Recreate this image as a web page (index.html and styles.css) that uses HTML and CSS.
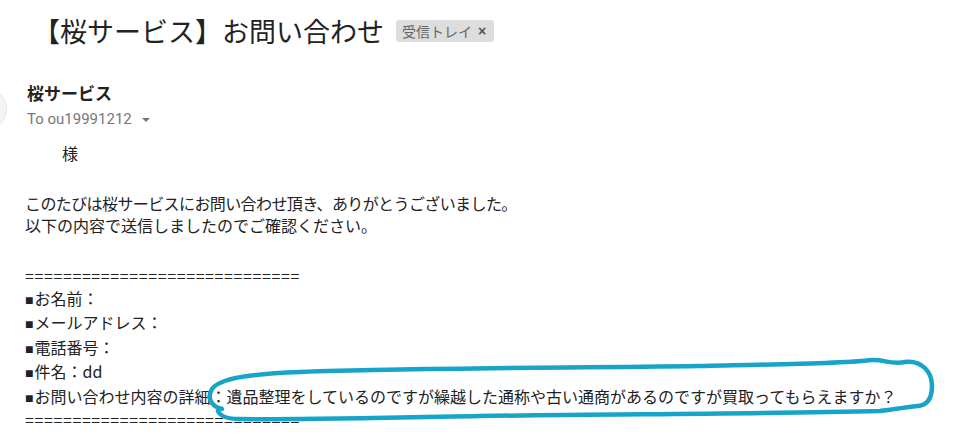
FILE: index.html
```html
<!DOCTYPE html>
<html lang="ja">
  <head>
    <meta charset="UTF-8" />
    <meta name="viewport" content="width=device-width, initial-scale=1.0" />
    <title>【桜サービス】お問い合わせ</title>
    <link rel="stylesheet" href="styles.css">
  </head>
  <body>
    <div class="mail">
      <div class="subject-row">
        <h1 class="subject">【桜サービス】お問い合わせ</h1>
        <span class="label">受信トレイ <b class="label-x">×</b></span>
      </div>

      <div class="sender-row">
        <div class="avatar"></div>
        <div class="sender">
          <div class="sender-name">桜サービス</div>
          <div class="recipient">To ou19991212 <span class="caret"></span></div>
        </div>
      </div>

      <div class="body">
        <p class="greeting">様</p>
        <p class="intro"><span class="tight">このたびは桜サービスにお問い合わせ頂き、ありがとうございました。</span><br>以下の内容で送信しましたのでご確認ください。</p>
        <div class="fields">
          <div class="rule">=============================</div>
          <div><span class="sq">■</span>お名前：</div>
          <div><span class="sq">■</span>メールアドレス：</div>
          <div><span class="sq">■</span>電話番号：</div>
          <div><span class="sq">■</span>件名：dd</div>
          <div><span class="sq">■</span>お問い合わせ内容の詳細：遺品整理をしているのですが繰越した通称や古い通商があるのですが買取ってもらえますか？</div>
          <div class="rule">=============================</div>
        </div>
      </div>
    </div>

    <!-- hand drawn marker circle over the last field -->
    <svg class="marker" width="960" height="442" viewBox="0 0 960 442">
      <path d="M222 409 C210 406 207 397 212 389 C220 378 250 374 300 372 C420 368 560 368 700 366 C780 364 840 364 872 360 C884 359 890 365 905 362 C922 360 932 372 932 386 C932 398 928 405 918 406 C900 408 890 410 880 411 C760 414 620 414 480 416 C380 418 300 420 240 419 C228 419 220 416 218 411"/>
    </svg>
  </body>
</html>
```

FILE: styles.css
```css
body {
  margin: 0;
  background: #fff;
  color: #222;
  font-family: "Noto Sans CJK JP", "Noto Sans", sans-serif;
  overflow: hidden;
}

.mail {
  padding: 0 0 0 25px;
}

.subject-row {
  display: flex;
  align-items: center;
  gap: 12px;
  padding: 8px 0 0 8px;
  height: 46px;
}

.subject {
  margin: 0;
  font-size: 27px;
  font-weight: 400;
  line-height: 38px;
  color: #222;
}

.label {
  display: inline-flex;
  align-items: center;
  gap: 6px;
  height: 22px;
  padding: 0 8px 0 6px;
  background: #ddd;
  border-radius: 3px;
  color: #666;
  font-size: 14px;
}

.label-x {
  font-family: "Liberation Sans", sans-serif;
  font-size: 14px;
  color: #555;
}

.sender-row {
  display: flex;
  align-items: flex-start;
  margin-top: 26px;
}

.avatar {
  width: 40px;
  height: 40px;
  margin: 8px 20px 0 -60px;
  border-radius: 50%;
  background: #f4f4f4;
  border: 1px solid #e6e6e6;
}

.sender-name {
  font-size: 17px;
  font-weight: 700;
  line-height: 26px;
  color: #222;
}

.recipient {
  font-family: Roboto, "Liberation Sans", sans-serif;
  font-size: 15px;
  line-height: 26px;
  color: #777;
}

.caret {
  display: inline-block;
  margin-left: 6px;
  vertical-align: middle;
  border-left: 4px solid transparent;
  border-right: 4px solid transparent;
  border-top: 4px solid #777;
}

.body {
  font-size: 16px;
  color: #222;
}

.greeting {
  margin: 10px 0 0 37px;
  line-height: 22px;
}

.intro {
  margin: 28px 0 0;
  line-height: 22px;
}

.tight {
  letter-spacing: -0.6px;
}

.fields {
  margin-top: 28px;
  line-height: 24.4px;
}

.rule {
  letter-spacing: 0.6px;
  line-height: 22px;
}

.sq {
  font-family: "Liberation Sans", sans-serif;
  font-size: 14px;
  line-height: 1;
  margin-right: 1px;
}

.marker {
  position: absolute;
  top: 0;
  left: 0;
  pointer-events: none;
}

.marker path {
  fill: none;
  stroke: #18a4c9;
  stroke-width: 4.5;
  stroke-linecap: round;
  stroke-linejoin: round;
}
```
